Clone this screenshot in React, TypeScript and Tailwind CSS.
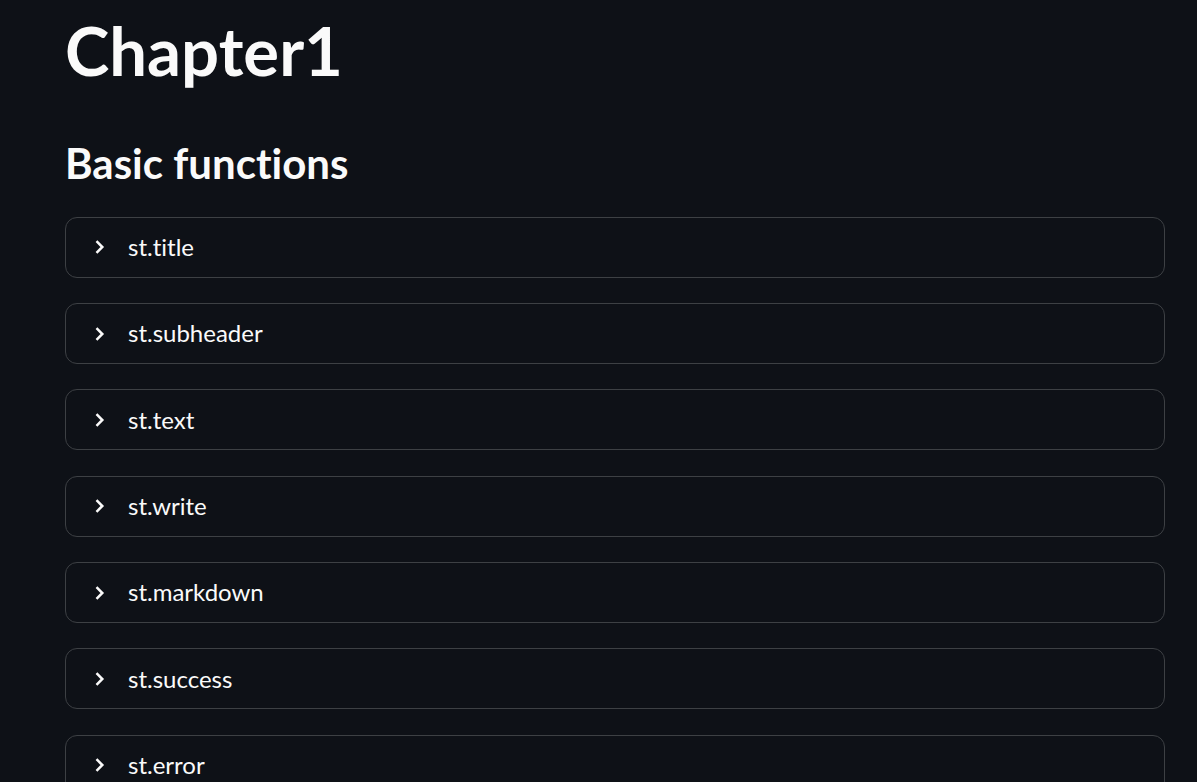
import React from "react";

const items = [
  "st.title",
  "st.subheader",
  "st.text",
  "st.write",
  "st.markdown",
  "st.success",
  "st.error",
];

const Chevron: React.FC = () => (
  <svg width="24" height="24" viewBox="0 0 24 24" fill="none" className="shrink-0">
    <path d="M9.5 6.2 L15.3 12 L9.5 17.8" stroke="#fafafa" strokeWidth="2.5" strokeLinejoin="miter" />
  </svg>
);

const Expander: React.FC<{ label: string }> = ({ label }) => (
  <div className="h-[61px] shrink-0 rounded-[12px] border border-[#3d4044] flex items-center pl-[21px] gap-[17px]">
    <Chevron />
    <span className="text-[24px] leading-[1.2] text-[#fafafa] [font-variant-ligatures:none]">{label}</span>
  </div>
);

export default function App() {
  return (
    <div
      className="h-screen overflow-hidden bg-[#0e1117] text-[#fafafa]"
      style={{ fontFamily: "Lato, 'Noto Sans', sans-serif" }}
    >
      <div className="w-[1100px] ml-[65px] flex flex-col">
        <h1 className="mt-[10px] text-[67px] leading-[1.2] font-bold">Chapter1</h1>
        <h2 className="mt-[48px] text-[42px] leading-[1.2] font-bold [font-variant-ligatures:none]">
          Basic functions
        </h2>
        <div className="mt-[28px] flex flex-col gap-[25.33px]">
          {items.map((it) => (
            <Expander key={it} label={it} />
          ))}
        </div>
      </div>
    </div>
  );
}
